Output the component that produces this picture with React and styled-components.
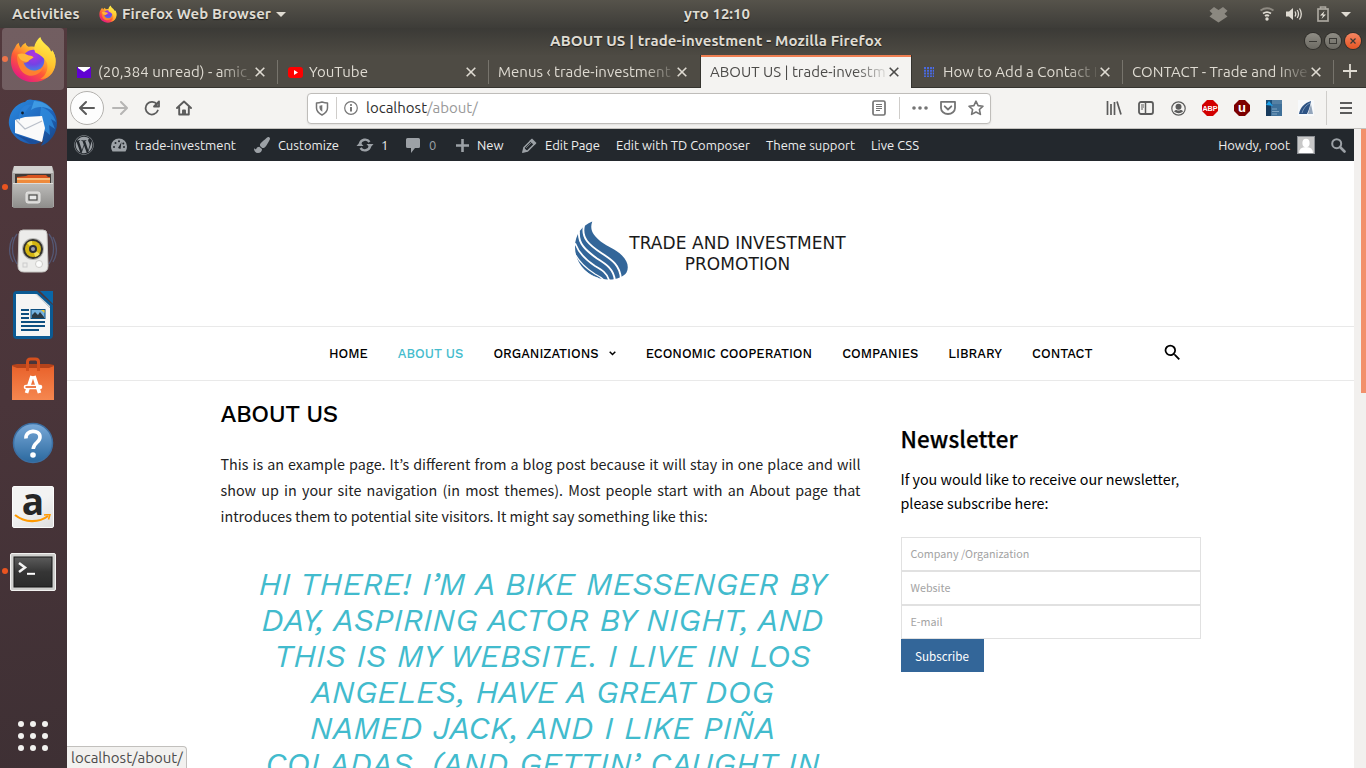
import React from 'react';
import styled, { createGlobalStyle, css } from 'styled-components';
import { FaWordpress, FaPaintBrush } from 'react-icons/fa';
import { MdSearch } from 'react-icons/md';

const ui = '"Ubuntu", "Noto Sans", sans-serif';
const head = '"Work Sans", Inter, sans-serif';
const body = '"Noto Sans CJK KR", "Noto Sans", sans-serif';

const Global = createGlobalStyle`
  * { box-sizing: border-box; }
  html, body { margin: 0; padding: 0; overflow: hidden; }
  body { background: #fff; font-family: ${ui}; }
  svg { display: block; flex: none; }
`;

const Screen = styled.div`
  width: 1366px;
  height: 768px;
  display: flex;
  flex-direction: column;
  overflow: hidden;
`;

/* ---------- top panel ---------- */
const Panel = styled.header`
  height: 28px;
  flex: none;
  display: grid;
  grid-template-columns: 672px auto 1fr;
  align-items: center;
  padding: 0 15px 0 12px;
  background: linear-gradient(#56534b, #3d3c38);
  color: #dfdbd2;
  font: 700 15px/28px ${ui};
  text-shadow: 0 1px 1px rgba(0, 0, 0, 0.6);
`;
const PanelSide = styled.div`
  display: flex;
  align-items: center;
  justify-content: ${(p) => (p.$end ? 'flex-end' : 'flex-start')};
`;
const Activities = styled.span`
  width: 87px;
  letter-spacing: 0.1px;
`;
const AppMenu = styled.span`
  display: flex;
  align-items: center;
  gap: 5px;
  letter-spacing: 0.1px;
`;
const TrayIcon = styled.span`
  display: flex;
  margin-left: ${(p) => p.$gap}px;
`;

/* ---------- dock ---------- */
const Desk = styled.div`
  flex: 1;
  display: flex;
  min-height: 0;
`;
const Dock = styled.nav`
  width: 67px;
  flex: none;
  display: flex;
  flex-direction: column;
  background: linear-gradient(172deg, #52393d 0%, #4a353a 50%, #3e3034 100%);
`;
const DockCell = styled.div`
  height: ${(p) => (p.$active ? 62 : 64)}px;
  margin-bottom: ${(p) => (p.$active ? 1 : 0)}px;
  flex: none;
  display: flex;
  align-items: center;
`;
const Dot = styled.i`
  width: 6px;
  height: 6px;
  margin-left: 2px;
  border-radius: 50%;
  background: ${(p) => (p.$on ? '#e95420' : 'transparent')};
`;
const DockTile = styled.div`
  width: 62px;
  height: 62px;
  margin-left: -6px;
  display: flex;
  align-items: center;
  justify-content: center;
  border-radius: 4px;
  background: ${(p) => (p.$active ? 'rgba(255,255,255,0.19)' : 'transparent')};
`;
const AppsGrid = styled.div`
  margin: auto 0 17px 18px;
  display: grid;
  grid-template-columns: repeat(3, 6px);
  gap: 6px;
`;
const AppsDot = styled.i`
  width: 6px;
  height: 6px;
  border-radius: 50%;
  background: #f2f1ef;
`;

/* ---------- browser window ---------- */
const Window = styled.section`
  position: relative;
  flex: 1;
  min-width: 0;
  display: flex;
  flex-direction: column;
`;
const TitleBar = styled.div`
  height: 27px;
  flex: none;
  display: grid;
  grid-template-columns: 1fr auto 1fr;
  align-items: center;
  padding: 0 5px 2px 0;
  background: linear-gradient(#3b3a36, #4d4a43);
  color: #dfdbd2;
  font: 700 15px/25px ${ui};
  text-shadow: 0 1px 1px rgba(0, 0, 0, 0.6);
`;
const Title = styled.span`
  grid-column: 2;
  letter-spacing: 0.13px;
  padding-left: 4px;
`;
const WinButtons = styled.div`
  display: flex;
  justify-content: flex-end;
  gap: 4px;
`;
const WinButton = styled.span`
  width: 16px;
  height: 16px;
  border-radius: 50%;
  display: flex;
  align-items: center;
  justify-content: center;
  color: #3a3935;
  background: ${(p) => (p.$close ? 'linear-gradient(#f58662, #e65523)' : 'linear-gradient(#8f8d85, #6c6a63)')};
  box-shadow: 0 0 0 1px rgba(40, 39, 35, 0.7);
`;
const Tabs = styled.div`
  height: 33px;
  flex: none;
  display: flex;
  background: #4e4b44;
  border-bottom: 1px solid #35342f;
`;
const Tab = styled.div`
  width: ${(p) => p.$w || 211}px;
  flex: none;
  display: flex;
  align-items: center;
  padding: 2px 13px 0 ${(p) => p.$pad || 9}px;
  color: #dfdbd2;
  font: 400 15px/30px ${ui};
  ${(p) =>
    p.$active &&
    css`
      height: 33px;
      padding-top: 1px;
      padding-right: 12px;
      color: #4c4b49;
      background: linear-gradient(#ef7f52 2px, #f4f3f1 2px) padding-box;
      border: solid #35342f;
      border-width: 0 1px;
    `}
`;
const TabSep = styled.i`
  width: 1px;
  margin: 5px 0 3px -1px;
  flex: none;
  background: #77746c;
`;
const TabIcon = styled.span`
  width: 14px;
  margin-right: 7px;
  display: flex;
  justify-content: center;
`;
const TabText = styled.span`
  flex: 1;
  min-width: 0;
  margin-right: 4px;
  overflow: hidden;
  white-space: nowrap;
  mask-image: linear-gradient(90deg, #000 calc(100% - 30px), rgba(0, 0, 0, 0.15) 100%);
`;
const NewTab = styled.span`
  flex: 1;
  display: flex;
  align-items: center;
  justify-content: center;
`;
const Toolbar = styled.div`
  height: 41px;
  flex: none;
  display: flex;
  align-items: center;
  padding: 0 3px;
  background: #f4f3f1;
  border-bottom: 1px solid #c4c2bf;
  color: #5b5b5b;
`;
const ToolButton = styled.span`
  width: ${(p) => p.$w || 32}px;
  height: 34px;
  display: flex;
  align-items: center;
  justify-content: center;
  opacity: ${(p) => (p.$off ? 0.4 : 1)};
`;
const BackButton = styled(ToolButton)`
  width: 34px;
  border: 1px solid #b3b1ae;
  border-radius: 50%;
  background: #fdfdfd;
`;
const UrlBar = styled.div`
  width: 684px;
  height: 31px;
  margin: 0 107px;
  display: flex;
  align-items: center;
  padding: 0 0 0 4px;
  border: 1px solid #bfbdba;
  border-radius: 4px;
  background: #fff;
  box-shadow: 0 1px 2px rgba(0, 0, 0, 0.08);
  color: #747474;
`;
const UrlSlot = styled.span`
  width: ${(p) => p.$w}px;
  display: flex;
  justify-content: center;
`;
const UrlText = styled.span`
  flex: 1;
  font: 400 15px/30px ${ui};
  color: #999;
`;
const Host = styled.b`
  font-weight: 400;
  color: #2f2f2f;
`;
const VLine = styled.i`
  width: 1px;
  height: ${(p) => p.$h}px;
  flex: none;
  background: #cfcdca;
`;

/* ---------- page ---------- */
const Viewport = styled.div`
  flex: 1;
  min-height: 0;
  display: flex;
`;
const Scroll = styled.div`
  width: 12px;
  flex: none;
  padding-left: 7px;
  background: #f2f0ee;
`;
const Thumb = styled.div`
  height: 264px;
  background: #f2906b;
`;
const Page = styled.div`
  width: 1287px;
  flex: none;
  overflow: hidden;
  background: #fff;
`;
const AdminBar = styled.div`
  height: 32px;
  display: flex;
  align-items: center;
  padding-left: 7px;
  background: #23282d;
  color: #eee;
  font: 400 13px/32px ${ui};
`;
const AdminItem = styled.span`
  width: ${(p) => p.$w}px;
  flex: none;
  display: flex;
  align-items: center;
  white-space: nowrap;
  color: ${(p) => (p.$dim ? '#9ca1a6' : '#eee')};
`;
const AdminIcon = styled.span`
  width: 20px;
  margin-right: ${(p) => (p.$gap === undefined ? 6 : p.$gap)}px;
  display: flex;
  justify-content: center;
  color: #9ca1a6;
`;
const AdminRight = styled.span`
  margin-left: auto;
  padding-right: 6px;
  display: flex;
  align-items: center;
`;
const Avatar = styled.span`
  width: 18px;
  height: 18px;
  margin: 0 13px 0 7px;
  border: 1px solid #8c8f94;
  background: #c8c8c8;
  overflow: hidden;
`;
const Brand = styled.div`
  height: 165px;
  padding-top: 15px;
  display: flex;
  align-items: center;
  justify-content: center;
`;
const BrandText = styled.div`
  width: 217.500px;
  padding-top: 5px;
  text-align: center;
  font: 400 17px/21px "DejaVu Sans", sans-serif;
  letter-spacing: 0.08px;
  white-space: nowrap;
  color: #1a1a1a;
`;
const Menu = styled.div`
  height: 55px;
  display: flex;
  align-items: center;
  gap: 30px;
  padding-left: 261.900px;
  border-top: 1px solid #e9e9e9;
  border-bottom: 1px solid #e9e9e9;
`;
const MenuItem = styled.span`
  display: flex;
  align-items: center;
  gap: 10px;
  font: 500 13px/20px ${head};
  white-space: nowrap;
  color: ${(p) => (p.$active ? '#45bccd' : '#000')};
`;
const MenuSearch = styled.span`
  margin: -2px 0 0 40px;
  color: #000;
`;
const Columns = styled.div`
  width: 980px;
  margin: 0 auto;
  display: flex;
  gap: 40px;
`;
const Main = styled.main`
  width: 640px;
  flex: none;
  padding-top: 18px;
`;
const Heading = styled.h1`
  margin: 0 0 21px;
  font: 500 24px/31px ${head};
  letter-spacing: -0.5px;
  color: #000;
`;
const Para = styled.p`
  margin: 0 0 37px;
  font: 400 14.33px/26px ${body};
  text-align: justify;
  color: #222;
`;
const Quote = styled.blockquote`
  margin: 0;
  padding-left: 4px;
  font: italic 400 32px/36px ${head};
  letter-spacing: -0.05px;
  text-align: center;
  color: #42bbcd;
  text-transform: uppercase;
`;
const QuoteLine = styled.span`
  display: block;
  white-space: nowrap;
`;
const Aside = styled.aside`
  width: 300px;
  padding-top: 41px;
`;
const AsideTitle = styled.h3`
  margin: 0 0 13px;
  font: 500 22.4px/32px ${body};
  letter-spacing: 0.1px;
  -webkit-text-stroke: 0.25px #000;
  color: #000;
`;
const AsideText = styled.p`
  margin: 0 0 22px;
  font: 400 14.3px/24px ${body};
  color: #000;
`;
const Field = styled.div`
  height: 34px;
  padding: 0 9px;
  border: 1px solid #e1e1e1;
  font: 400 10.75px/32px ${body};
  color: #a3a3a3;
`;
const Submit = styled.div`
  width: 83px;
  height: 33px;
  text-align: center;
  background: #336699;
  color: #fff;
  font: 400 11.65px/33px ${body};
`;
const Status = styled.div`
  position: absolute;
  left: 0;
  bottom: 0;
  width: 120px;
  height: 22px;
  padding-left: 4px;
  border: 1px solid #c2c0bd;
  border-width: 1px 1px 0 0;
  border-radius: 0 4px 0 0;
  background: #f2f1ef;
  color: #4c4c4c;
  font: 400 15px/21px ${ui};
`;

/* ---------- drawings ---------- */
const Firefox = ({ size, id }) => (
  <svg width={size} height={size} viewBox="0 0 48 48">
    <defs>
      <linearGradient id={id + 'a'} x1=".85" y1=".1" x2=".2" y2=".95">
        <stop offset="0" stopColor="#fff44f" /><stop offset=".3" stopColor="#ffb02e" />
        <stop offset=".6" stopColor="#ff5a36" /><stop offset="1" stopColor="#e31587" />
      </linearGradient>
      <radialGradient id={id + 'b'} cx=".5" cy=".25" r=".8">
        <stop offset="0" stopColor="#b333e0" /><stop offset=".55" stopColor="#7542e5" /><stop offset="1" stopColor="#3a8ee6" />
      </radialGradient>
      <linearGradient id={id + 'c'} x1=".6" y1="0" x2=".4" y2="1">
        <stop offset="0" stopColor="#fff44f" /><stop offset=".6" stopColor="#ffc52f" /><stop offset="1" stopColor="#ff8a2e" />
      </linearGradient>
    </defs>
    <path d="M5 12c1-2 2-4 4-5 0 2 1 4 2 5 1-2 3-4 5-5 0 2 1 3 3 4 5-1 9 0 12 2l13 3c2 4 3 7 2 12-1 11-10 19-22 19C11 47 1 38 1 26c0-6 1-10 4-14z" fill={`url(#${id}a)`} />
    <circle cx="24" cy="25" r="11" fill={`url(#${id}b)`} />
    <path d="M31 1c1 4 4 6 8 10 2 2 3 4 3 6 1-1 1-2 1-3 5 8 5 17 0 24-3 4-7 6-12 6 6-4 8-10 7-16-2-5-7-9-12-11-3-5 0-12 5-16z" fill={`url(#${id}c)`} />
    <path d="M7 19c4-1 8 0 11 1 3 0 5 1 6 2-2 1-4 2-5 4-2 1-4 2-5 1 2 8 12 11 20 5-2 6-9 10-16 8C10 38 7 28 7 19z" fill="#ff8a2b" opacity=".85" />
    <path d="M8 19c3-2 8-1 11 1 3 0 4 1 5 2l-5 3c-1 1-2 2-4 1-3 0-6-3-7-7z" fill="#ffb63a" />
  </svg>
);
const Thunderbird = () => (
  <svg width="50" height="50" viewBox="0 0 50 50">
    <defs><linearGradient id="tb" x1="0" y1="0" x2="1" y2="1"><stop offset="0" stopColor="#2a8be0" /><stop offset=".6" stopColor="#1e62b8" /><stop offset="1" stopColor="#17427f" /></linearGradient></defs>
    <path d="M1 27C0 14 9 5 17 4c2-3 6-3 8-2 13 0 24 10 24 23 0 10-6 19-16 23l3-6-9 4C14 47 3 38 1 27z" fill="url(#tb)" />
    <path d="M33 9c7 2 13 8 15 15l-5-3 4 10-6-4 1 10-6-5-3 10-3-8z" fill="#2f8fe0" opacity=".75" />
    <path d="M26 3c8 0 15 4 19 10-8-5-16-5-22-1z" fill="#4aa9ee" opacity=".7" />
    <path d="M7 22l10-3 17-1 3 12-3 14-27-9z" fill="#fafafa" />
    <path d="M8 22l9 9 17-8" fill="none" stroke="#b9bfc9" strokeWidth="1.200" />
    <path d="M7 36l26 9-10 1z" fill="#1b4f9b" />
    <path d="M13 12c2-5 7-6 11-5-3 1-4 4-6 6-2 3-4 3-6 7l-1 3c-1-4 0-8 2-11z" fill="#2a7fd6" />
    <circle cx="14.500" cy="15" r="1.400" fill="#112233" />
  </svg>
);
const Files = () => (
  <svg width="42" height="44" viewBox="0 0 42 44">
    <defs><linearGradient id="fi" x1="0" y1="0" x2="0" y2="1"><stop offset="0" stopColor="#bdbcba" /><stop offset="1" stopColor="#8e8d8b" /></linearGradient></defs>
    <path d="M2 1h38l2 6v35H0V7z" fill="#a5a4a2" /><path d="M2 1h38l1 7H1z" fill="#d2d1cf" />
    <rect x="3" y="9" width="36" height="10" fill="#413b38" />
    <path d="M5 12l9-1 2-1h18l2 2h2v7H5z" fill="#d8541f" /><path d="M5 13h33v6H5z" fill="#f3a04f" /><path d="M5 15h33v3H5z" fill="#ee8a3c" />
    <path d="M5 14h33" stroke="#f9dcae" />
    <rect x="1" y="18" width="40" height="25" rx="1" fill="url(#fi)" /><path d="M1 18.500h40" stroke="#dddcda" />
    <rect x="14" y="27" width="14" height="11" rx="2" fill="#d4d3d1" stroke="#e8e7e6" /><rect x="17" y="30" width="8" height="5" fill="#e8e8e8" stroke="#4a4a48" strokeWidth="1.200" />
  </svg>
);
const Rhythmbox = () => (
  <svg width="48" height="46" viewBox="0 0 48 46">
    <g fill="none" stroke="#5b78ab" strokeWidth="1.300" opacity=".5"><path d="M8 6C2 14 2 27 8 36M4 9C-.5 17-.5 27 4 34M40 6c6 8 6 21 0 30M44 9c4.500 8 4.500 18 0 25" /></g>
    <path d="M14 2h20q4 0 4 4l1 32q0 6-6 6H15q-6 0-6-6l1-32q0-4 4-4z" fill="#ececea" stroke="#c7c6c3" />
    <circle cx="24" cy="21" r="11" fill="#b5b5b2" /><circle cx="24" cy="21" r="10" fill="#33322e" /><circle cx="24" cy="21" r="8" fill="#d3b411" />
    <path d="M24 21l-6-6a8.500 8.500 0 0 1 5-2zM24 21l7 5a8 8 0 0 1-5 3z" fill="#f3e25a" />
    <circle cx="24" cy="21" r="4" fill="#2c2e38" /><circle cx="24" cy="21" r="2" fill="#9a9eae" />
    <circle cx="30" cy="36" r="3.500" fill="#fbfbfa" stroke="#c4c3bf" strokeWidth=".8" /><rect x="14" y="35" width="4" height="4" fill="none" stroke="#cccccc" />
  </svg>
);
const Writer = () => (
  <svg width="42" height="48" viewBox="0 0 42 48">
    <path d="M5 0h20l16 14v30q0 4-4 4H5q-4 0-4-4V4q0-4 4-4z" fill="#0b5a93" />
    <path d="M28 0h13v13z" fill="#0a67a8" /><path d="M4 3h20l14 14v28H4z" fill="#f5f5f4" /><path d="M23 3l15 14V15L25 3z" fill="#d7d9da" />
    <g stroke="#0d4f80" strokeWidth="2"><path d="M9 19h8M9 23h8M9 27h8M9 31h24M9 35h24M9 39h18" /></g>
    <rect x="19" y="18.500" width="14" height="9" fill="#75b2e0" stroke="#0d4f80" /><path d="M20 27v-3l3-3 3 3 2-3 4 5v1z" fill="#2b3a45" /><path d="M29 19h3.500v3z" fill="#f3c829" />
  </svg>
);
const Software = () => (
  <svg width="42" height="44" viewBox="0 0 42 44">
    <defs><linearGradient id="so" x1="0" y1="0" x2="0" y2="1"><stop offset="0" stopColor="#e9622b" /><stop offset="1" stopColor="#f58750" /></linearGradient></defs>
    <path d="M0 8l5-1h32l5 1v3H0z" fill="#b5431b" /><path d="M0 9l5 2h32l5-2v34H0z" fill="url(#so)" />
    <path d="M15.500 14V5q0-3 3-3h5q3 0 3 3v9" fill="none" stroke="#d4501e" strokeWidth="3" />
    <path d="M20 19l-5.500 17M22 19l5.500 17" stroke="#fff" strokeWidth="3.600" /><path d="M14 30h14" stroke="#fff" strokeWidth="4.600" strokeLinecap="round" /><path d="M13.500 30h10.500" stroke="#ed6e36" strokeWidth="1.800" />
  </svg>
);
const Help = () => (
  <svg width="42" height="42" viewBox="0 0 42 42">
    <defs><linearGradient id="he" x1="0" y1="0" x2="0" y2="1"><stop offset="0" stopColor="#79a9d8" /><stop offset="1" stopColor="#2b699f" /></linearGradient></defs>
    <circle cx="21" cy="21" r="19.500" fill="url(#he)" stroke="#3c6fa3" strokeWidth="1.500" />
    <path d="M14 16.500c-1-9 14-9.500 14-1.500 0 5.500-6.500 5.500-6.800 12" fill="none" stroke="#fff" strokeWidth="3.600" /><circle cx="21" cy="33" r="2.800" fill="#fff" />
  </svg>
);
const TileBox = styled.span`
  width: 42px;
  height: 42px;
  border-radius: 2px;
  border: 1px solid #fbfbfb;
  background: linear-gradient(150deg, #f3f3f3 45%, #dedede);
  display: flex;
  flex-direction: column;
  align-items: center;
  color: #262626;
  font: 700 37px/27px "Open Sans", sans-serif;
`;
const Amazon = () => (
  <TileBox>
    <span>a</span>
    <svg width="38" height="10" viewBox="0 0 38 10"><path d="M1 1c10 8 24 8 33 1" fill="none" stroke="#ff9900" strokeWidth="2.200" /><path d="M30 1l6-.5-1.500 5" fill="none" stroke="#ff9900" strokeWidth="1.600" /></svg>
  </TileBox>
);
const Terminal = () => (
  <svg width="46" height="40" viewBox="0 -2 46 40">
    <defs><linearGradient id="te" x1="0" y1="0" x2="0" y2="1"><stop offset="0" stopColor="#5c5c5c" /><stop offset=".5" stopColor="#353535" /><stop offset="1" stopColor="#2b2b2b" /></linearGradient></defs>
    <rect x=".5" y=".5" width="45" height="37" rx="1.500" fill="#cfcfcd" stroke="#f1f1f0" /><rect x="4" y="4" width="38" height="30" fill="url(#te)" stroke="#171717" />
    <path d="M9 10l6 4.500-6 4.500" fill="none" stroke="#f4f4f4" strokeWidth="2.500" /><path d="M17 20.800h8" stroke="#fff" strokeWidth="2" />
  </svg>
);
const Caret = () => <svg width="10" height="5" viewBox="0 0 10 5"><path d="M0 0h10L5 5z" fill="#dfdbd2" /></svg>;
const Box = () => <svg width="19" height="17" viewBox="0 0 19 17"><path d="M5 1l4.500 3L14 1l4.500 3.800-3 3 3 2.700-3 2-6 4-6-4-3-2 3-2.700-3-3z" fill="#8b8880" /></svg>;
const Wifi = () => (
  <svg width="14" height="14" viewBox="0 0 14 14" fill="none" strokeWidth="1.800"><path d="M.5 3.500q6.500-4.500 13 0" stroke="#8d8981" /><path d="M3 6.500q4-2.800 8 0M5 9q2-1.500 4 0" stroke="#dfdbd2" /><circle cx="7" cy="12" r="1.700" fill="#dfdbd2" /></svg>
);
const Volume = () => (
  <svg width="16" height="14" viewBox="0 0 16 14"><path d="M0 4.500h3L7 1v12L3 9.500H0z" fill="#dfdbd2" /><path d="M9 4.500q1.500 2.500 0 5M11.200 3q2.600 4 0 8M13.500 1.500q3.600 5.500 0 11" fill="none" stroke="#dfdbd2" strokeWidth="1.300" /></svg>
);
const Battery = () => (
  <svg width="12" height="16" viewBox="0 0 12 16"><path d="M3.500 3V1h5v2" fill="none" stroke="#aaa69e" strokeWidth="1.600" /><rect x="1" y="3" width="10" height="12" fill="none" stroke="#aaa69e" strokeWidth="1.700" /><path d="M7.500 5L3 9.500h3L4.500 13 9 8.500H6.200z" fill="#e6e2d9" /></svg>
);
const Close = () => <svg width="10" height="10" viewBox="0 0 10 10"><path d="M.7.700l8.600 8.600M9.300.700L.7 9.300" stroke="currentColor" strokeWidth="1.600" /></svg>;
const Line = ({ d, w = 1.8 }) => (
  <svg width="16" height="16" viewBox="0 0 16 16" fill="none" stroke="currentColor" strokeWidth={w} strokeLinecap="round" strokeLinejoin="round"><path d={d} /></svg>
);
const Info = () => (
  <svg width="14" height="14" viewBox="0 0 14 14"><circle cx="7" cy="7" r="6.300" fill="none" stroke="#777777" strokeWidth="1.200" /><path d="M7 6v4.500" stroke="#666666" strokeWidth="1.800" /><circle cx="7" cy="3.900" r="1" fill="#666666" /></svg>
);
const Shield = () => (
  <svg width="14" height="15" viewBox="0 0 14 15"><path d="M7 1q3 1 5.500 1v5q0 4-5.500 7Q1.500 11 1.500 7V2Q4 2 7 1z" fill="none" stroke="currentColor" strokeWidth="1.500" strokeLinejoin="round" /><path d="M7.300 4q-1.500.6-2.800.7v2.300q0 2 2.800 3.800z" fill="currentColor" /></svg>
);
const Account = () => (
  <svg width="15" height="15" viewBox="0 0 15 15"><circle cx="7.500" cy="7.500" r="6.700" fill="none" stroke="currentColor" strokeWidth="1.200" /><circle cx="7.500" cy="5.800" r="3" fill="currentColor" /><path d="M3 10.500q1-2 2.500-1.500 2 1 4 0 2-.5 2.500 1.500-4 3.500-9 0z" fill="currentColor" /></svg>
);
const BadgeSvg = styled.svg`
  font: 700 ${(p) => p.$fs}px "Liberation Sans", sans-serif;
`;
const Octagon = ({ color, label, fs, y }) => (
  <BadgeSvg width="16" height="16" viewBox="0 0 16 16" $fs={fs}>
    <path d="M5 0h6l5 5v6l-5 5H5l-5-5V5z" fill={color} /><text x="8" y={y} textAnchor="middle" fill="#fff">{label}</text>
  </BadgeSvg>
);
const Drop = () => (
  <svg width="54" height="60" viewBox="0 0 54 60">
    <path d="M17.300.5C14 9 19 15 26 20.700 33 26 41 28 47 34.500c6 6 7 12 4.500 17C49 56 40 59 33 58.500 14 58 0 43 0 26 0 13 7 5 17.300.5z" fill="#336699" />
    <g fill="none" stroke="#fff" strokeLinecap="round">
      <path d="M9 4.500C6 17 14 24 27 32.500 37 39 45 44 46 58" strokeWidth="1.900" />
      <path d="M4 11C3 22 10 29 22 37.500 31 43 39 48 40 60" strokeWidth="1.900" />
      <path d="M.5 23C4 33 11 39 20 45c7 4 12 7 14 14" strokeWidth="1.700" />
      <path d="M0 33c5 9 12 15 20 20 4 2 7 4 9 6" strokeWidth="1.200" />
      <path d="M5 45c5 6 11 10 18 12" strokeWidth=".7" />
    </g>
  </svg>
);

const dock = [
  { icon: <Firefox size={47} id="ffl" />, on: true, active: true },
  { icon: <Thunderbird /> },
  { icon: <Files />, on: true },
  { icon: <Rhythmbox /> },
  { icon: <Writer /> },
  { icon: <Software /> },
  { icon: <Help /> },
  { icon: <Amazon /> },
  { icon: <Terminal />, on: true },
];

const tabs = [
  { text: '(20,384 unread) - amic_', pad: 10, icon: <svg width="14" height="11" viewBox="0 0 14 11"><path d="M0 0h14v11H0z" fill="#6001d2" /><path d="M1 0h12v1L7 5 1 1z" fill="#fff" /></svg> },
  { text: 'YouTube', pad: 10, icon: <svg width="15" height="11" viewBox="0 0 15 11"><rect width="15" height="11" rx="3" fill="#ff0000" /><path d="M6 3l4 2.500L6 8z" fill="#fff" /></svg> },
  { text: 'Menus ‹ trade-investment' },
  { text: 'ABOUT US | trade-investm', active: true },
  { text: 'How to Add a Contact F', pad: 10, icon: <svg width="10" height="10" viewBox="0 0 10 10"><path d="M1 0v10M4 0v10M7 0v10M9.700 0v10" stroke="#4a6df0" strokeWidth="1.800" strokeDasharray="2 .8" /></svg> },
  { text: 'CONTACT - Trade and Inve' },
];

const quote = [
  'Hi there! I’m a bike messenger by',
  'day, aspiring actor by night, and',
  'this is my website. I live in Los',
  'Angeles, have a great dog',
  'named Jack, and I like piña',
  'coladas. (And gettin’ caught in',
];

export default function App() {
  return (
    <Screen>
      <Global />
      <Panel>
        <PanelSide>
          <Activities>Activities</Activities>
          <AppMenu><Firefox size={18} id="ffs" />Firefox Web Browser<Caret /></AppMenu>
        </PanelSide>
        <span>уто 12:10</span>
        <PanelSide $end>
          <TrayIcon><Box /></TrayIcon>
          <TrayIcon $gap={32}><Wifi /></TrayIcon>
          <TrayIcon $gap={12}><Volume /></TrayIcon>
          <TrayIcon $gap={15}><Battery /></TrayIcon>
          <TrayIcon $gap={12}><Caret /></TrayIcon>
        </PanelSide>
      </Panel>
      <Desk>
        <Dock>
          {dock.map((d, i) => (
            <DockCell key={i} $active={d.active}>
              <Dot $on={d.on} />
              <DockTile $active={d.active}>{d.icon}</DockTile>
            </DockCell>
          ))}
          <AppsGrid>{Array.from({ length: 9 }, (_, i) => <AppsDot key={i} />)}</AppsGrid>
        </Dock>
        <Window>
          <TitleBar>
            <Title>ABOUT US | trade-investment - Mozilla Firefox</Title>
            <WinButtons>
              <WinButton><svg width="8" height="8" viewBox="0 0 8 8"><path d="M0 4.500h8" stroke="currentColor" /></svg></WinButton>
              <WinButton><svg width="8" height="8" viewBox="0 0 8 8"><rect x=".5" y="1.500" width="7" height="5" fill="none" stroke="currentColor" /></svg></WinButton>
              <WinButton $close><svg width="6" height="6" viewBox="0 0 6 6"><path d="M.5.500l5 5M5.500.500l-5 5" stroke="currentColor" strokeWidth="1.200" /></svg></WinButton>
            </WinButtons>
          </TitleBar>
          <Tabs>
            {tabs.map((t, i) => (
              <React.Fragment key={t.text}>
                <Tab $active={t.active} $pad={t.pad} $w={t.active ? 212 : 211}>
                  {t.icon && <TabIcon>{t.icon}</TabIcon>}
                  <TabText>{t.text}</TabText>
                  <Close />
                </Tab>
                {i !== 2 && i !== 3 && <TabSep />}
              </React.Fragment>
            ))}
            <NewTab><svg width="14" height="14" viewBox="0 0 14 14"><path d="M7 0v14M0 7h14" stroke="#dfdbd2" strokeWidth="1.800" /></svg></NewTab>
          </Tabs>
          <Toolbar>
            <BackButton><Line d="M15 8H1.500M7 2L1 8l6 6" w={2} /></BackButton>
            <ToolButton $off><Line d="M1 8h13.500M9 2l6 6-6 6" w={2} /></ToolButton>
            <ToolButton><Line d="M13 4.500A6.300 6.300 0 1 0 13.800 10.500M15 1.500v5H10z" /></ToolButton>
            <ToolButton><Line d="M1 8l7-6.500L15 8M3.200 7.500V14.500h9.600V7.500M7 14v-3.500h2V14" w={1.9} /></ToolButton>
            <UrlBar>
              <UrlSlot $w={20}><Shield /></UrlSlot>
              <UrlSlot $w={8}><VLine $h={22} /></UrlSlot>
              <UrlSlot $w={21}><Info /></UrlSlot>
              <UrlSlot $w={5} />
              <UrlText><Host>localhost</Host>/about/</UrlText>
              <UrlSlot $w={28}><svg width="14" height="16" viewBox="0 0 14 16"><rect x="1" y="1" width="12" height="14" rx="1.500" fill="none" stroke="#747474" strokeWidth="1.700" /><path d="M4 4.500h6M4 6.500h6M4 8.500h6M4 10.500h4" stroke="#747474" /></svg></UrlSlot>
              <UrlSlot $w={13}><VLine $h={22} /></UrlSlot>
              <UrlSlot $w={27}><svg width="16" height="4" viewBox="0 0 16 4" fill="#747474"><circle cx="2" cy="2" r="1.800" /><circle cx="8" cy="2" r="1.800" /><circle cx="14" cy="2" r="1.800" /></svg></UrlSlot>
              <UrlSlot $w={29}><Line d="M1 1.800h14V8a7 6 0 0 1-14 0zM4.700 6.300L8 9.500l3.300-3.200" /></UrlSlot>
              <UrlSlot $w={28}><Line d="M8 1.200l2.100 4.400 4.900.6-3.600 3.300 1 4.900L8 12l-4.400 2.400 1-4.900L1 6.200l4.900-.6z" w={1.6} /></UrlSlot>
            </UrlBar>
            <ToolButton><svg width="16" height="14" viewBox="0 0 16 14" stroke="currentColor" strokeWidth="1.700"><path d="M1.500 0v14M5 3v11M8.500 1v13M11 .5l4 13" /></svg></ToolButton>
            <ToolButton><svg width="16" height="14" viewBox="0 0 16 14" fill="none" stroke="currentColor"><rect x="1" y="1" width="14" height="12" rx="2" strokeWidth="1.800" /><path d="M7.500 1v12" strokeWidth="1.500" /><path d="M3 4h3M3 6h3M3 8h2" /></svg></ToolButton>
            <ToolButton><Account /></ToolButton>
            <ToolButton><Octagon color="#d20000" label="ABP" fs={7.2} y={10.600} /></ToolButton>
            <ToolButton><Octagon color="#7d0000" label="u" fs={13} y={12} /></ToolButton>
            <ToolButton><svg width="16" height="16" viewBox="0 0 16 16"><rect width="16" height="16" fill="#5580a3" /><path d="M0 5h5v11H0z" fill="#173a5c" /><path d="M5 4h11v12H5z" fill="#3f7099" /><path d="M0 0h6v5H0z" fill="#1d4f78" /><path d="M0 5l3-4 4 5z" fill="#1ba0e8" /><path d="M6 9h5M6 11.500h7M6 14h5" stroke="#7fa3c0" /></svg></ToolButton>
            <ToolButton><svg width="16" height="16" viewBox="0 0 16 16"><rect width="16" height="16" fill="#f7f9fb" /><path d="M1 14C2 8 6 3 13 1c-1 5-2 9-4 13z" fill="#2d5384" /><path d="M4 13c1-4 4-8 8-10" stroke="#7593b9" fill="none" /><path d="M13 4l2 10h-5z" fill="#93a5bb" /></svg></ToolButton>
            <ToolButton $w={8}><VLine $h={34} /></ToolButton>
            <ToolButton><svg width="12" height="12" viewBox="0 0 12 12"><path d="M0 1h12M0 6h12M0 11h12" stroke="currentColor" strokeWidth="1.900" /></svg></ToolButton>
          </Toolbar>
          <Viewport>
            <Page>
              <AdminBar>
                <AdminItem $w={35}><AdminIcon><FaWordpress size={20} /></AdminIcon></AdminItem>
                <AdminItem $w={143}>
                  <AdminIcon><svg width="16" height="14" viewBox="0 0 16 14"><path d="M8 .5a8 8 0 0 0-8 8q0 3 1.500 5h13Q16 11.500 16 8.500a8 8 0 0 0-8-8z" fill="currentColor" /><path d="M7 10l3.500-6-1 7" fill="#23282d" /><g fill="#23282d"><circle cx="3" cy="9" r="1" /><circle cx="4.500" cy="5" r="1" /><circle cx="8" cy="3.200" r="1" /><circle cx="13" cy="9" r="1" /><circle cx="12.300" cy="5.500" r="1" /></g></svg></AdminIcon>
                  trade-investment
                </AdminItem>
                <AdminItem $w={103}><AdminIcon><FaPaintBrush size={16} /></AdminIcon>Customize</AdminItem>
                <AdminItem $w={48}>
                  <AdminIcon><svg width="18" height="14" viewBox="0 0 18 14"><path d="M4 6a5.200 5.200 0 0 1 9.500-2M14 8a5.200 5.200 0 0 1-9.500 2" fill="none" stroke="currentColor" strokeWidth="2.400" /><path d="M10.500 6h7L14 10zM.5 8h7L4 4z" fill="currentColor" /></svg></AdminIcon>1
                </AdminItem>
                <AdminItem $w={49} $dim><AdminIcon><svg width="14" height="15" viewBox="0 0 14 15"><path d="M1.500 0h11q1.500 0 1.500 1.500v7q0 1.500-1.500 1.500H9l-4 5v-5H1.500Q0 10 0 8.500v-7Q0 0 1.500 0z" fill="currentColor" /></svg></AdminIcon>0</AdminItem>
                <AdminItem $w={67}><AdminIcon $gap={5}><svg width="13" height="13" viewBox="0 0 13 13"><path d="M6.500 0v13M0 6.500h13" stroke="currentColor" strokeWidth="2.600" /></svg></AdminIcon>New</AdminItem>
                <AdminItem $w={97}><AdminIcon><svg width="15" height="15" viewBox="0 0 15 15"><path d="M2 9.500L9.500 2l3.500 3.500L5.500 13 1 14z" fill="none" stroke="currentColor" strokeWidth="1.500" /><path d="M10 .8L14.200 5l-2 2L8 2.800zM1 14l1-4 3 3zM4 10l6-6" fill="currentColor" stroke="currentColor" strokeWidth=".6" /></svg></AdminIcon>Edit Page</AdminItem>
                <AdminItem $w={150}>Edit with TD Composer</AdminItem>
                <AdminItem $w={105}>Theme support</AdminItem>
                <AdminItem $w={60}>Live CSS</AdminItem>
                <AdminRight>
                  Howdy, root
                  <Avatar><svg width="16" height="16" viewBox="0 0 16 16" fill="#fff"><ellipse cx="8" cy="6" rx="3.600" ry="4.300" /><path d="M1 16q0-6 7-6t7 6z" /></svg></Avatar>
                  <AdminIcon $gap={0}><svg width="15" height="15" viewBox="0 0 15 15"><circle cx="5.700" cy="5.700" r="4.500" fill="none" stroke="currentColor" strokeWidth="2" /><path d="M9 9l4.500 4.500" stroke="currentColor" strokeWidth="2.600" strokeLinecap="round" /></svg></AdminIcon>
                </AdminRight>
              </AdminBar>
              <Brand><Drop /><BrandText>TRADE AND INVESTMENT<br />PROMOTION</BrandText></Brand>
              <Menu>
                <MenuItem>HOME</MenuItem>
                <MenuItem $active>ABOUT US</MenuItem>
                <MenuItem>ORGANIZATIONS<svg width="7" height="5" viewBox="0 0 7 5"><path d="M.7.700L3.500 3.500 6.300.700" fill="none" stroke="#000" strokeWidth="1.500" /></svg></MenuItem>
                <MenuItem>ECONOMIC COOPERATION</MenuItem>
                <MenuItem>COMPANIES</MenuItem>
                <MenuItem>LIBRARY</MenuItem>
                <MenuItem>CONTACT</MenuItem>
                <MenuSearch><MdSearch size={21} /></MenuSearch>
              </Menu>
              <Columns>
                <Main>
                  <Heading>ABOUT US</Heading>
                  <Para>This is an example page. It’s different from a blog post because it will stay in one place and will show up in your site navigation (in most themes). Most people start with an About page that introduces them to potential site visitors. It might say something like this:</Para>
                  <Quote>{quote.map((q) => <QuoteLine key={q}>{q}</QuoteLine>)}</Quote>
                </Main>
                <Aside>
                  <AsideTitle>Newsletter</AsideTitle>
                  <AsideText>If you would like to receive our newsletter, please subscribe here:</AsideText>
                  <Field>Company /Organization</Field>
                  <Field>Website</Field>
                  <Field>E-mail</Field>
                  <Submit>Subscribe</Submit>
                </Aside>
              </Columns>
            </Page>
            <Scroll><Thumb /></Scroll>
          </Viewport>
          <Status>localhost/about/</Status>
        </Window>
      </Desk>
    </Screen>
  );
}
